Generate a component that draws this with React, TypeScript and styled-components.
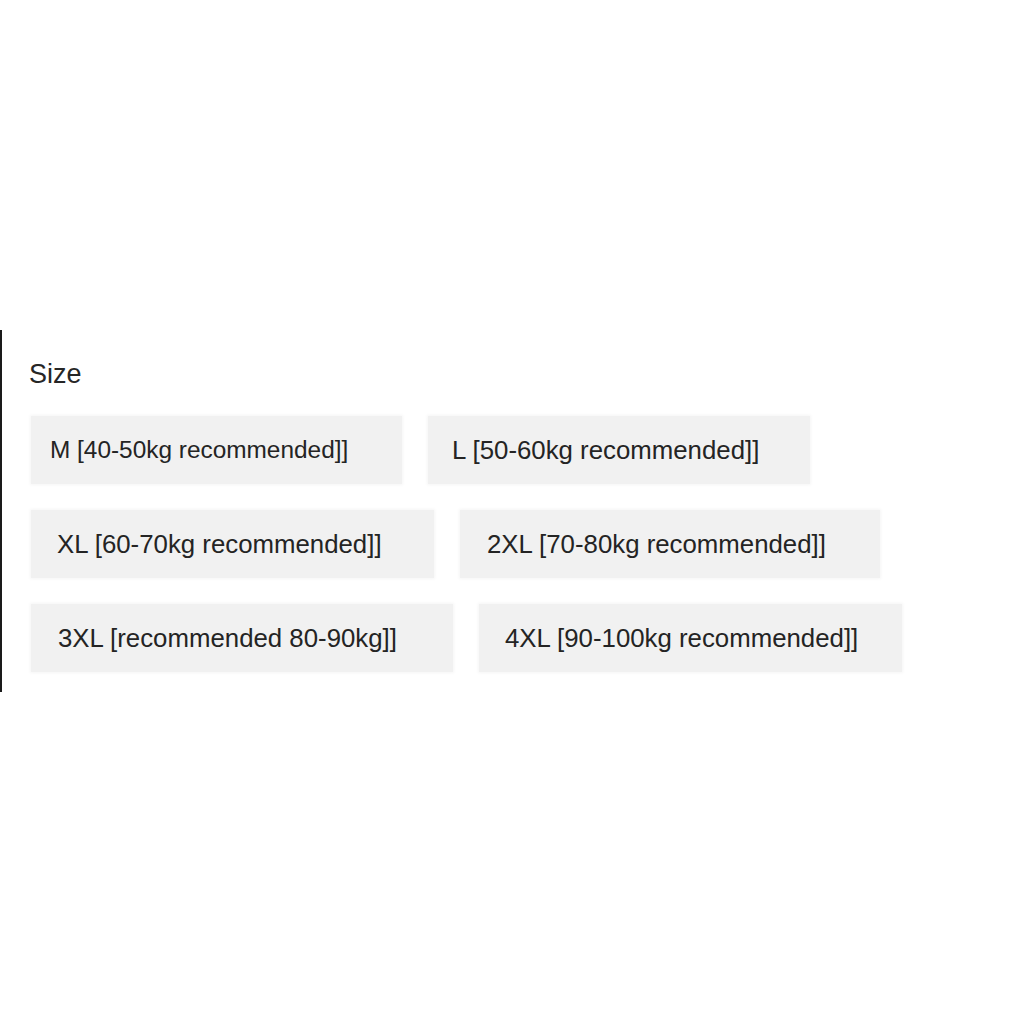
import styled, { createGlobalStyle } from "styled-components";

const GlobalStyle = createGlobalStyle`
    html, body {
        margin: 0;
        padding: 0;
        background: #ffffff;
    }
    body {
        font-family: "Liberation Sans", Arial, sans-serif;
        color: #222222;
    }
`;

const Page = styled.div`
    width: 1024px;
    height: 1024px;
    padding-top: 330px;
    box-sizing: border-box;
`;

const SizePanel = styled.div`
    border-left: 2px solid #1a1a1a;
    padding: 28px 0 20px 27px;
    display: flex;
    flex-direction: column;
`;

const Title = styled.div`
    font-size: 27px;
    line-height: 32px;
    color: #262626;
`;

const ChipList = styled.div`
    margin-top: 26px;
    margin-left: 2px;
    display: flex;
    flex-direction: column;
    gap: 26px;
`;

const ChipRow = styled.div`
    display: flex;
    flex-direction: row;
    gap: 26px;
`;

const Chip = styled.div<{ $pad: number; $width: number; $size: number }>`
    width: ${(p) => p.$width}px;
    height: 68px;
    box-sizing: border-box;
    display: flex;
    align-items: center;
    padding-left: ${(p) => p.$pad}px;
    background-color: #f1f1f1;
    box-shadow: 0 0 3px 1px #f5f5f5;
    font-size: ${(p) => p.$size}px;
    color: #242424;
    white-space: nowrap;
`;

const rows = [
    [
        { label: "M [40-50kg recommended]]", pad: 19, width: 371, size: 24.4 },
        { label: "L [50-60kg recommended]]", pad: 24, width: 382, size: 25.8 },
    ],
    [
        { label: "XL [60-70kg recommended]]", pad: 26, width: 403, size: 25.8 },
        { label: "2XL [70-80kg recommended]]", pad: 27, width: 420, size: 25.8 },
    ],
    [
        { label: "3XL [recommended 80-90kg]]", pad: 27, width: 422, size: 25.8 },
        { label: "4XL [90-100kg recommended]]", pad: 26, width: 423, size: 25.8 },
    ],
];

export default function App() {
    return (
        <>
            <GlobalStyle />
            <Page>
                <SizePanel>
                    <Title>Size</Title>
                    <ChipList>
                        {rows.map((row, idx) => (
                            <ChipRow key={`row_${idx}`}>
                                {row.map((chip) => (
                                    <Chip key={chip.label} $pad={chip.pad} $width={chip.width} $size={chip.size}>
                                        {chip.label}
                                    </Chip>
                                ))}
                            </ChipRow>
                        ))}
                    </ChipList>
                </SizePanel>
            </Page>
        </>
    );
}
